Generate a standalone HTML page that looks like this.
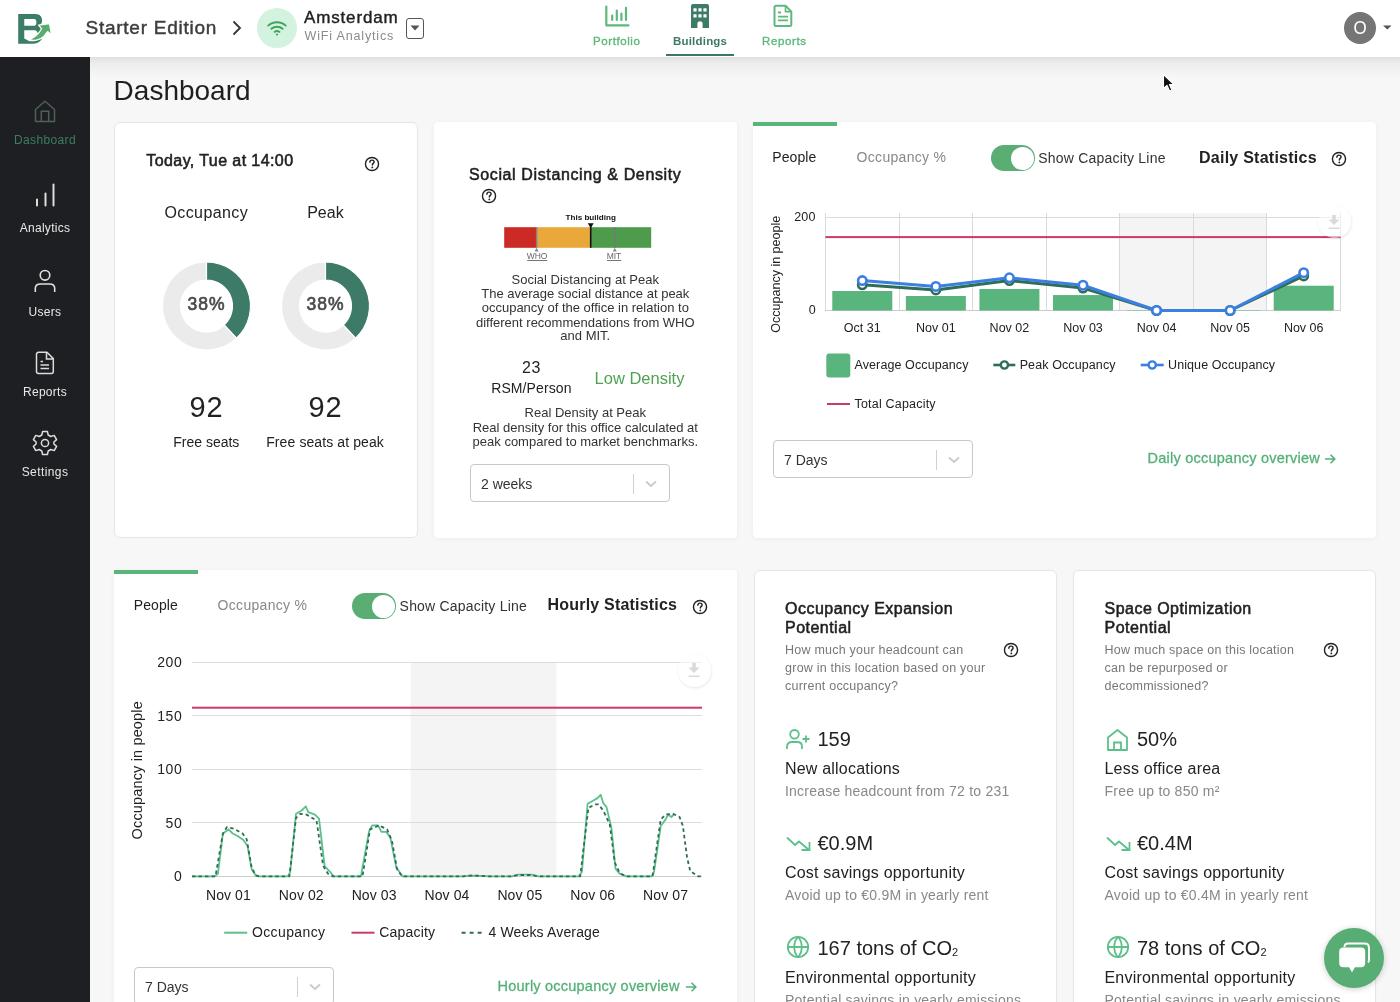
<!DOCTYPE html>
<html><head><meta charset="utf-8">
<style>
*{box-sizing:border-box;margin:0;padding:0}
html,body{width:1400px;height:1002px;overflow:hidden}
body{font-family:"Liberation Sans",sans-serif;background:#f7f7f7;color:#222;position:relative}
.abs{position:absolute}
.t{position:absolute;white-space:nowrap;line-height:1}
#header{position:absolute;left:0;top:0;width:1400px;height:57px;background:#fff;z-index:5}
#hshadow{position:absolute;left:90px;top:57px;width:1310px;height:20px;background:linear-gradient(#e0e0e0,#ececec 30%,rgba(247,247,247,0));z-index:4}
#sidebar{position:absolute;left:0;top:57px;width:90px;height:945px;background:#1e1f22}
.side-l{position:absolute;left:0;width:90px;text-align:center;font-size:12px;color:#e8e8e8;line-height:1}
.card{position:absolute;background:#fff;border:1px solid #e6e6e6;border-radius:6px;box-shadow:0 0 2px rgba(0,0,0,0.04)}
.card2{position:absolute;background:#fff;border-radius:4px}
.help{position:absolute;width:15px;height:15px;border:1.5px solid #222;border-radius:50%;font-size:10px;font-weight:bold;text-align:center;line-height:12px;color:#222}
.sel{position:absolute;height:37px;border:1px solid #c8c8c8;border-radius:4px;background:#fff}
.sel .v{position:absolute;left:10px;top:11px;font-size:14px;color:#333;line-height:1}
.sel .sep{position:absolute;top:8px;width:1px;height:20px;background:#ccc}
</style></head>
<body><div id="root" style="position:absolute;left:0;top:0;width:1400px;height:1002px;overflow:hidden;will-change:transform">
<div id="header">
<svg class="abs" style="left:16px;top:12px" width="38" height="34" viewBox="0 0 38 34">
<path fill-rule="evenodd" d="M2.2 2.1 H19.5 C24 2.1 26.1 5 26.1 8.6 C26.1 11 25 12.5 23.5 13.6 C26 15 27.5 17.5 27.5 21 C27.5 27.5 23 31.8 17 31.8 H2.2 Z M8.25 7.1 V13.8 H18.2 C19.8 13.8 20.4 12.3 20.4 10.5 C20.4 8.6 19.8 7.1 18.2 7.1 Z M8.25 18.2 V26.6 L13.5 29.2 H18.5 C20.5 29.2 22 27 22 23 C22 19.8 20.5 18.2 18.5 18.2 Z" fill="#3b7d67"/>
<path d="M13.2 27.6 C17.5 29 24 28.6 28 24.2 L31.6 19.6 L35.6 22.9 L33.5 11.6 L22.6 13.1 L25.6 16.8 C22.8 21.8 19 25.6 13.2 27.6 Z" fill="#58ad6e" stroke="#fff" stroke-width="1.3" stroke-linejoin="round"/>
</svg>
<div class="t" style="left:85.5px;top:18.3px;font-size:19px;-webkit-text-stroke:0.45px #3b3e3d;color:#3b3e3d;letter-spacing:0.75px">Starter Edition</div>
<svg class="abs" style="left:231px;top:20px" width="12" height="16" viewBox="0 0 12 16"><path d="M2.5 1.5 L9 8 L2.5 14.5" fill="none" stroke="#333" stroke-width="1.8"/></svg>
<div class="abs" style="left:257px;top:8px;width:40px;height:40px;border-radius:50%;background:#d3f2df"></div>
<svg class="abs" style="left:267px;top:20px" width="20" height="16" viewBox="0 0 20 16">
<path d="M1.3 5.6 C6 1.2 14 1.2 18.7 5.6" fill="none" stroke="#3fa55a" stroke-width="1.9" stroke-linecap="round"/>
<path d="M4.4 8.8 C7.5 6 12.5 6 15.6 8.8" fill="none" stroke="#3fa55a" stroke-width="1.9" stroke-linecap="round"/>
<path d="M7.5 11.9 C9 10.8 11 10.8 12.5 11.9" fill="none" stroke="#3fa55a" stroke-width="1.8" stroke-linecap="round"/>
<circle cx="10" cy="14.5" r="1.1" fill="#3fa55a"/>
</svg>
<div class="t" style="left:304px;top:9.3px;font-size:17px;-webkit-text-stroke:0.4px #222;color:#222;letter-spacing:0.85px">Amsterdam</div>
<div class="t" style="left:304.5px;top:30px;font-size:12.5px;color:#8a8a8a;letter-spacing:0.85px">WiFi Analytics</div>
<div class="abs" style="left:406px;top:18px;width:18px;height:21px;border:1.5px solid #555;border-radius:3px"></div>
<svg class="abs" style="left:410px;top:25px" width="10" height="6"><path d="M0.5 0.5 H9.5 L5 5.5 Z" fill="#555"/></svg>

<svg class="abs" style="left:604px;top:5px" width="27" height="23" viewBox="0 0 27 23">
<path d="M2.3 1.5 V20.3 H24.5" fill="none" stroke="#5cb87b" stroke-width="2.2" stroke-linecap="round" stroke-linejoin="round"/>
<path d="M8.2 15 V10.5 M12.8 15 V5.5 M17.4 15 V8.5 M22 15 V2.8" fill="none" stroke="#5cb87b" stroke-width="2.2" stroke-linecap="round"/>
</svg>
<div class="t" style="left:593px;top:35.9px;font-size:11.5px;-webkit-text-stroke:0.35px #5cb87b;color:#5cb87b;letter-spacing:0.59px">Portfolio</div>
<svg class="abs" style="left:691px;top:4px" width="18" height="24" viewBox="0 0 18 24">
<path d="M2 0 H16 A2 2 0 0 1 18 2 V24 H11.6 V19.8 A2.6 2.6 0 0 0 6.4 19.8 V24 H0 V2 A2 2 0 0 1 2 0 Z" fill="#3d7b68"/>
<rect x="2.4" y="4.2" width="3.2" height="3.2" rx="0.5" fill="#fff"/><rect x="7.4" y="4.2" width="3.2" height="3.2" rx="0.5" fill="#fff"/><rect x="12.4" y="4.2" width="3.2" height="3.2" rx="0.5" fill="#fff"/>
<rect x="2.4" y="10.2" width="3.2" height="3.2" rx="0.5" fill="#fff"/><rect x="7.4" y="10.2" width="3.2" height="3.2" rx="0.5" fill="#fff"/><rect x="12.4" y="10.2" width="3.2" height="3.2" rx="0.5" fill="#fff"/>
</svg>
<div class="t" style="left:673px;top:36px;font-size:11.5px;font-weight:bold;color:#3d7866;letter-spacing:0.2px">Buildings</div>
<div class="abs" style="left:666px;top:54px;width:68px;height:2px;background:#3d7866"></div>
<svg class="abs" style="left:773px;top:4px" width="20" height="24" viewBox="0 0 20 24">
<path d="M3 1.8 H12.5 L18.3 7.6 V20.5 A1.5 1.5 0 0 1 16.8 22 H3 A1.5 1.5 0 0 1 1.5 20.5 V3.3 A1.5 1.5 0 0 1 3 1.8 Z" fill="none" stroke="#5cb87b" stroke-width="2" stroke-linejoin="round"/>
<path d="M12.5 1.8 V7.6 H18.3" fill="none" stroke="#5cb87b" stroke-width="1.6"/>
<path d="M5 8.5 H8 M5 12.6 H15 M5 16.4 H15" stroke="#5cb87b" stroke-width="1.8"/>
</svg>
<div class="t" style="left:762px;top:35.8px;font-size:11.5px;-webkit-text-stroke:0.35px #5cb87b;color:#5cb87b;letter-spacing:0.63px">Reports</div>

<div class="abs" style="left:1344px;top:12px;width:32px;height:32px;border-radius:50%;background:#757575"></div>
<div class="t" style="left:1344px;top:20px;width:32px;text-align:center;font-size:17px;color:#fff;transform:scaleY(1.08)">O</div>
<svg class="abs" style="left:1383px;top:25px" width="9" height="5"><path d="M0 0.5 H8.5 L4.25 4.5 Z" fill="#555"/></svg>
</div>
<div id="hshadow"></div>
<div id="sidebar">
<svg class="abs" style="left:34px;top:43px" width="22" height="23" viewBox="0 0 22 23">
<path d="M1.5 9.5 L11 1.3 L20.5 9.5 V21.5 H1.5 Z" fill="none" stroke="#4f5f57" stroke-width="1.5" stroke-linejoin="round"/>
<path d="M7.3 21.5 V11.3 H14.7 V21.5" fill="none" stroke="#4f5f57" stroke-width="1.5"/>
</svg>
<div class="side-l" style="top:77px;color:#3b7f61;letter-spacing:0.35px">Dashboard</div>
<svg class="abs" style="left:35px;top:126px" width="21" height="24" viewBox="0 0 21 24">
<path d="M2 16.5 V22.5 M10.5 10.5 V22.5 M18.5 1.5 V22.5" stroke="#dcdcdc" stroke-width="2" stroke-linecap="round"/>
</svg>
<div class="side-l" style="top:165px;letter-spacing:0.3px">Analytics</div>
<svg class="abs" style="left:34px;top:212px" width="22" height="24" viewBox="0 0 22 24">
<circle cx="11" cy="6.3" r="4.8" fill="none" stroke="#e0e0e0" stroke-width="1.6"/>
<path d="M1.3 23 V19.5 C1.3 16.5 3.5 15 6.5 15 H15.5 C18.5 15 20.7 16.5 20.7 19.5 V23" fill="none" stroke="#e0e0e0" stroke-width="1.6"/>
</svg>
<div class="side-l" style="top:249px;letter-spacing:0.3px">Users</div>
<svg class="abs" style="left:35px;top:294px" width="20" height="24" viewBox="0 0 20 24">
<path d="M3.5 1.3 H12 L18.3 7.6 V20.5 A2 2 0 0 1 16.3 22.5 H3.5 A2 2 0 0 1 1.5 20.5 V3.3 A2 2 0 0 1 3.5 1.3 Z" fill="none" stroke="#dcdcdc" stroke-width="1.5" stroke-linejoin="round"/>
<path d="M11.5 1.5 V8 H18" fill="none" stroke="#dcdcdc" stroke-width="1.5"/>
<path d="M5.5 10.5 H8 M5.5 14 H14 M5.5 17.5 H14" stroke="#dcdcdc" stroke-width="1.5"/>
</svg>
<div class="side-l" style="top:329px;letter-spacing:0.3px">Reports</div>
<svg class="abs" style="left:32px;top:373px" width="26" height="26" viewBox="0 0 26 26">
<path d="M10.6 1.5 H15.4 L16.2 5 L18.8 6.5 L22.2 5.4 L24.6 9.6 L21.9 12 V14 L24.6 16.4 L22.2 20.6 L18.8 19.5 L16.2 21 L15.4 24.5 H10.6 L9.8 21 L7.2 19.5 L3.8 20.6 L1.4 16.4 L4.1 14 V12 L1.4 9.6 L3.8 5.4 L7.2 6.5 L9.8 5 Z" fill="none" stroke="#dcdcdc" stroke-width="1.5" stroke-linejoin="round"/>
<circle cx="13" cy="13" r="3.6" fill="none" stroke="#dcdcdc" stroke-width="1.5"/>
</svg>
<div class="side-l" style="top:409px;letter-spacing:0.4px">Settings</div>
</div>

<div class="t" style="top:77.30px;font-size:28px;color:#1f1f1f;left:113.60px;">Dashboard</div>
<div class="card" style="left:114px;top:122px;width:304px;height:416px"></div>
<div class="t" style="top:153.36px;font-size:16px;-webkit-text-stroke:0.55px #222;letter-spacing:0.41px;left:146.30px;">Today, Tue at 14:00</div>
<svg class="abs" style="left:364.00px;top:156.30px" width="16" height="16" viewBox="0 0 16 16">
<circle cx="8" cy="8" r="6.55" fill="none" stroke="#222" stroke-width="1.4"/>
<path d="M5.9 6.2 C5.9 4.9 6.9 4.1 8 4.1 C9.2 4.1 10.1 4.9 10.1 6 C10.1 7.3 8.3 7.5 8.3 9.1" fill="none" stroke="#222" stroke-width="1.4" stroke-linecap="round"/>
<circle cx="8.3" cy="11.4" r="0.9" fill="#222"/>
</svg>
<div class="t" style="top:205.16px;font-size:16px;letter-spacing:0.4px;left:106.30px;width:200px;text-align:center;">Occupancy</div>
<div class="t" style="top:205.16px;font-size:16px;left:225.40px;width:200px;text-align:center;">Peak</div>
<svg class="abs" style="left:0;top:0" width="1400" height="1002"><path d="M236.62 338.07 A44 44 0 1 1 206.5 262 L206.5 280 A26 26 0 1 0 224.30 324.95 Z" fill="#ebebeb" stroke="#fff" stroke-width="1.2"/><path d="M206.5 262 A44 44 0 0 1 236.62 338.07 L224.30 324.95 A26 26 0 0 0 206.5 280 Z" fill="#3d7a68" stroke="#fff" stroke-width="1.2"/><path d="M355.62 338.07 A44 44 0 1 1 325.5 262 L325.5 280 A26 26 0 1 0 343.30 324.95 Z" fill="#ebebeb" stroke="#fff" stroke-width="1.2"/><path d="M325.5 262 A44 44 0 0 1 355.62 338.07 L343.30 324.95 A26 26 0 0 0 325.5 280 Z" fill="#3d7a68" stroke="#fff" stroke-width="1.2"/></svg>
<div class="t" style="top:295.59px;font-size:17.5px;-webkit-text-stroke:0.55px #4a4a4a;color:#4a4a4a;letter-spacing:1.0px;left:156.50px;width:100px;text-align:center;-webkit-text-stroke:0.65px #4a4a4a">38%</div>
<div class="t" style="top:295.59px;font-size:17.5px;-webkit-text-stroke:0.55px #4a4a4a;color:#4a4a4a;letter-spacing:1.0px;left:275.50px;width:100px;text-align:center;-webkit-text-stroke:0.65px #4a4a4a">38%</div>
<div class="t" style="top:393.15px;font-size:29px;letter-spacing:1px;left:156.60px;width:100px;text-align:center;">92</div>
<div class="t" style="top:393.15px;font-size:29px;letter-spacing:1px;left:275.60px;width:100px;text-align:center;">92</div>
<div class="t" style="top:435.15px;font-size:14px;left:126.30px;width:160px;text-align:center;">Free seats</div>
<div class="t" style="top:435.15px;font-size:14px;letter-spacing:0.1px;left:245.10px;width:160px;text-align:center;">Free seats at peak</div>
<div class="card2" style="left:434px;top:122px;width:303px;height:416px;box-shadow:0 1px 5px rgba(0,0,0,0.05)"></div>
<div class="t" style="top:167.36px;font-size:16px;-webkit-text-stroke:0.55px #1f1f1f;color:#1f1f1f;letter-spacing:0.62px;left:469.00px;">Social Distancing &amp; Density</div>
<svg class="abs" style="left:480.90px;top:187.80px" width="16" height="16" viewBox="0 0 16 16">
<circle cx="8" cy="8" r="6.55" fill="none" stroke="#222" stroke-width="1.4"/>
<path d="M5.9 6.2 C5.9 4.9 6.9 4.1 8 4.1 C9.2 4.1 10.1 4.9 10.1 6 C10.1 7.3 8.3 7.5 8.3 9.1" fill="none" stroke="#222" stroke-width="1.4" stroke-linecap="round"/>
<circle cx="8.3" cy="11.4" r="0.9" fill="#222"/>
</svg>
<div class="t" style="top:214.34px;font-size:8.1px;font-weight:bold;color:#111;left:540.70px;width:100px;text-align:center;">This building</div>
<svg class="abs" style="left:0;top:0" width="1400" height="1002">
<rect x="504.2" y="227.2" width="32.4" height="20.6" fill="#cc2b25"/>
<rect x="536.6" y="227.2" width="54" height="20.6" fill="#eaa83a"/>
<rect x="590.6" y="227.2" width="60.6" height="20.6" fill="#4e9c4b"/>
<rect x="535.9" y="227.2" width="1.5" height="20.6" fill="#8a7f8a"/>
<rect x="614.1" y="227.2" width="1.5" height="20.6" fill="#777"/>
<rect x="589.9" y="225" width="1.6" height="22.8" fill="#111"/>
<path d="M587.7 223.2 H593.7 L590.7 228 Z" fill="#111"/>
<path d="M534.6 251.5 H538.6 L536.6 247.8 Z" fill="#888"/>
<path d="M612.8 251.5 H616.8 L614.8 247.8 Z" fill="#888"/>
<rect x="527.2" y="260" width="20" height="0.9" fill="#666"/>
<rect x="607" y="260" width="14.2" height="0.9" fill="#666"/>
</svg>
<div class="t" style="top:252.20px;font-size:8.5px;color:#666;left:517.10px;width:40px;text-align:center;">WHO</div>
<div class="t" style="top:252.20px;font-size:8.5px;color:#666;left:594.00px;width:40px;text-align:center;">MIT</div>
<div class="t" style="top:272.75px;font-size:13px;color:#333;left:455.30px;width:260px;text-align:center;">Social Distancing at Peak</div>
<div class="t" style="top:287.00px;font-size:13px;color:#333;left:455.30px;width:260px;text-align:center;">The average social distance at peak</div>
<div class="t" style="top:300.80px;font-size:13px;color:#333;left:455.30px;width:260px;text-align:center;">occupancy of the office in relation to</div>
<div class="t" style="top:315.60px;font-size:13px;color:#333;left:455.30px;width:260px;text-align:center;">different recommendations from WHO</div>
<div class="t" style="top:329.20px;font-size:13px;color:#333;left:455.30px;width:260px;text-align:center;">and MIT.</div>
<div class="t" style="top:360.06px;font-size:16px;letter-spacing:0.5px;left:481.40px;width:100px;text-align:center;">23</div>
<div class="t" style="top:380.85px;font-size:14px;letter-spacing:0.1px;left:471.40px;width:120px;text-align:center;">RSM/Person</div>
<div class="t" style="top:369.78px;font-size:16.5px;color:#4ea251;left:569.50px;width:140px;text-align:center;">Low Density</div>
<div class="t" style="top:406.00px;font-size:13px;color:#333;left:455.30px;width:260px;text-align:center;">Real Density at Peak</div>
<div class="t" style="top:420.80px;font-size:13px;color:#333;left:455.30px;width:260px;text-align:center;">Real density for this office calculated at</div>
<div class="t" style="top:434.50px;font-size:13px;color:#333;left:455.30px;width:260px;text-align:center;">peak compared to market benchmarks.</div>
<div class="sel" style="left:470px;top:464px;width:200px;height:38px">
<div class="t" style="left:10px;top:12.25px;font-size:14px;color:#333">2 weeks</div>
<div class="abs" style="left:162px;top:8.5px;width:1px;height:20px;background:#d0d0d0"></div>
<svg class="abs" style="left:174px;top:14.5px" width="12" height="8"><path d="M1 1.5 L6 6 L11 1.5" fill="none" stroke="#cbcbcb" stroke-width="2"/></svg>
</div>
<div class="card2" style="left:753px;top:122px;width:623px;height:416px;box-shadow:0 1px 5px rgba(0,0,0,0.05)"></div>
<div class="abs" style="left:753px;top:122px;width:84px;height:4px;background:#5ab57a"></div>
<div class="t" style="top:150.05px;font-size:14px;color:#1f1f1f;letter-spacing:0.1px;left:772.20px;">People</div>
<div class="t" style="top:150.05px;font-size:14px;color:#888;letter-spacing:0.3px;left:856.60px;">Occupancy %</div>
<div class="abs" style="left:991px;top:145px;width:44px;height:26px;border-radius:13px;background:#5aae74"></div>
<div class="abs" style="left:1010.5px;top:146.5px;width:23px;height:23px;border-radius:50%;background:#fff"></div>
<div class="t" style="top:151.05px;font-size:14px;color:#333;letter-spacing:0.2px;left:1038.30px;">Show Capacity Line</div>
<div class="t" style="top:149.86px;font-size:16px;font-weight:bold;letter-spacing:0.25px;left:1199.00px;">Daily Statistics</div>
<svg class="abs" style="left:1331.00px;top:151.00px" width="16" height="16" viewBox="0 0 16 16">
<circle cx="8" cy="8" r="6.55" fill="none" stroke="#222" stroke-width="1.4"/>
<path d="M5.9 6.2 C5.9 4.9 6.9 4.1 8 4.1 C9.2 4.1 10.1 4.9 10.1 6 C10.1 7.3 8.3 7.5 8.3 9.1" fill="none" stroke="#222" stroke-width="1.4" stroke-linecap="round"/>
<circle cx="8.3" cy="11.4" r="0.9" fill="#222"/>
</svg>
<svg class="abs" style="left:0;top:0" width="1400" height="1002"><rect x="1119.79" y="213.3" width="147.14" height="97.20" fill="#f4f4f4"/><rect x="825" y="213" width="1" height="97" fill="#dadada"/><rect x="899" y="213" width="1" height="97" fill="#dadada"/><rect x="972" y="213" width="1" height="97" fill="#dadada"/><rect x="1046" y="213" width="1" height="97" fill="#dadada"/><rect x="1119" y="213" width="1" height="97" fill="#dadada"/><rect x="1193" y="213" width="1" height="97" fill="#dadada"/><rect x="1266" y="213" width="1" height="97" fill="#dadada"/><rect x="1340" y="213" width="1" height="97" fill="#dadada"/><rect x="825" y="217" width="516" height="1" fill="#dadada"/><rect x="825" y="310" width="516" height="1" fill="#cdcdcd"/><rect x="832.29" y="291.01" width="60" height="19.49" fill="#5ab47d"/><rect x="905.86" y="296.01" width="60" height="14.49" fill="#5ab47d"/><rect x="979.43" y="289.00" width="60" height="21.51" fill="#5ab47d"/><rect x="1053.00" y="295.07" width="60" height="15.43" fill="#5ab47d"/><rect x="1126.57" y="310.13" width="60" height="0.37" fill="#5ab47d"/><rect x="1200.14" y="310.13" width="60" height="0.37" fill="#5ab47d"/><rect x="1273.71" y="285.72" width="60" height="24.78" fill="#5ab47d"/><rect x="825.5" y="236.10" width="515.0" height="2" fill="#c93a6b"/><polyline points="862.29,284.79 935.86,289.93 1009.43,280.58 1083.00,288.06 1156.57,310.50 1230.14,310.50 1303.71,275.90" fill="none" stroke="#2f6d57" stroke-width="3" stroke-linejoin="round"/><circle cx="862.29" cy="284.79" r="4.2" fill="#fff" stroke="#2f6d57" stroke-width="2.6"/><circle cx="935.86" cy="289.93" r="4.2" fill="#fff" stroke="#2f6d57" stroke-width="2.6"/><circle cx="1009.43" cy="280.58" r="4.2" fill="#fff" stroke="#2f6d57" stroke-width="2.6"/><circle cx="1083.00" cy="288.06" r="4.2" fill="#fff" stroke="#2f6d57" stroke-width="2.6"/><circle cx="1156.57" cy="310.50" r="4.2" fill="#fff" stroke="#2f6d57" stroke-width="2.6"/><circle cx="1230.14" cy="310.50" r="4.2" fill="#fff" stroke="#2f6d57" stroke-width="2.6"/><circle cx="1303.71" cy="275.90" r="4.2" fill="#fff" stroke="#2f6d57" stroke-width="2.6"/><polyline points="862.29,280.58 935.86,286.42 1009.43,277.77 1083.00,285.25 1156.57,310.50 1230.14,310.50 1303.71,272.63" fill="none" stroke="#3b7fe0" stroke-width="3" stroke-linejoin="round"/><circle cx="862.29" cy="280.58" r="4.2" fill="#fff" stroke="#3b7fe0" stroke-width="2.6"/><circle cx="935.86" cy="286.42" r="4.2" fill="#fff" stroke="#3b7fe0" stroke-width="2.6"/><circle cx="1009.43" cy="277.77" r="4.2" fill="#fff" stroke="#3b7fe0" stroke-width="2.6"/><circle cx="1083.00" cy="285.25" r="4.2" fill="#fff" stroke="#3b7fe0" stroke-width="2.6"/><circle cx="1156.57" cy="310.50" r="4.2" fill="#fff" stroke="#3b7fe0" stroke-width="2.6"/><circle cx="1230.14" cy="310.50" r="4.2" fill="#fff" stroke="#3b7fe0" stroke-width="2.6"/><circle cx="1303.71" cy="272.63" r="4.2" fill="#fff" stroke="#3b7fe0" stroke-width="2.6"/><rect x="826.3" y="353.6" width="24" height="24" rx="3" fill="#5ab47d"/><rect x="993.3" y="363.7" width="22" height="2.6" fill="#2f6d57"/><circle cx="1004.4" cy="365" r="3.6" fill="#fff" stroke="#2f6d57" stroke-width="2.4"/><rect x="1140.7" y="363.7" width="23" height="2.6" fill="#3b7fe0"/><circle cx="1152.2" cy="365" r="3.6" fill="#fff" stroke="#3b7fe0" stroke-width="2.4"/><rect x="827" y="403" width="23" height="2" fill="#c93a6b"/></svg>
<div class="abs" style="left:1317.5px;top:204.5px;width:33px;height:33px;border-radius:50%;background:rgba(255,255,255,0.55);box-shadow:0.5px 1px 3px rgba(0,0,0,0.10)"></div><svg class="abs" style="left:1326px;top:211px" width="16" height="19" viewBox="0 0 16 19"><path d="M6.2 4 H9.8 V8.6 H13.5 L8 14 L2.5 8.6 H6.2 Z M2.5 16.5 H13.5 V18 H2.5 Z" fill="#dadada"/></svg>
<div class="t" style="top:211.42px;font-size:12.5px;letter-spacing:0.2px;left:755.60px;width:60px;text-align:right;">200</div>
<div class="t" style="top:304.02px;font-size:12.5px;left:755.60px;width:60px;text-align:right;">0</div>
<div class="t" style="left:716px;top:268.0px;width:120px;text-align:center;font-size:12.5px;transform:rotate(-90deg);color:#222">Occupancy in people</div>
<div class="t" style="top:322.22px;font-size:12.5px;left:827.29px;width:70px;text-align:center;">Oct 31</div>
<div class="t" style="top:322.22px;font-size:12.5px;left:900.86px;width:70px;text-align:center;">Nov 01</div>
<div class="t" style="top:322.22px;font-size:12.5px;left:974.43px;width:70px;text-align:center;">Nov 02</div>
<div class="t" style="top:322.22px;font-size:12.5px;left:1048.00px;width:70px;text-align:center;">Nov 03</div>
<div class="t" style="top:322.22px;font-size:12.5px;left:1121.57px;width:70px;text-align:center;">Nov 04</div>
<div class="t" style="top:322.22px;font-size:12.5px;left:1195.14px;width:70px;text-align:center;">Nov 05</div>
<div class="t" style="top:322.22px;font-size:12.5px;left:1268.71px;width:70px;text-align:center;">Nov 06</div>
<div class="t" style="top:358.72px;font-size:12.5px;letter-spacing:0.1px;left:854.50px;">Average Occupancy</div>
<div class="t" style="top:358.72px;font-size:12.5px;letter-spacing:0.1px;left:1019.70px;">Peak Occupancy</div>
<div class="t" style="top:358.72px;font-size:12.5px;letter-spacing:0.1px;left:1168.00px;">Unique Occupancy</div>
<div class="t" style="top:397.82px;font-size:12.5px;letter-spacing:0.2px;left:854.50px;">Total Capacity</div>
<div class="sel" style="left:773px;top:440px;width:200px;height:38px">
<div class="t" style="left:10px;top:12.25px;font-size:14px;color:#333">7 Days</div>
<div class="abs" style="left:162px;top:8.5px;width:1px;height:20px;background:#d0d0d0"></div>
<svg class="abs" style="left:174px;top:14.5px" width="12" height="8"><path d="M1 1.5 L6 6 L11 1.5" fill="none" stroke="#cbcbcb" stroke-width="2"/></svg>
</div>
<div class="t" style="top:451.23px;font-size:14.5px;color:#55b079;letter-spacing:0.24px;left:1147.50px;-webkit-text-stroke:0.3px #55b079">Daily occupancy overview</div>
<svg class="abs" style="left:1323.8px;top:452.9px" width="13" height="12" viewBox="0 0 13 12"><path d="M1 6 H10.5 M6.5 1.8 L10.8 6 L6.5 10.2" fill="none" stroke="#55b079" stroke-width="1.6"/></svg>
<div class="card2" style="left:114px;top:570px;width:623px;height:440px;box-shadow:0 1px 5px rgba(0,0,0,0.05)"></div>
<div class="abs" style="left:114px;top:570px;width:84px;height:4px;background:#5ab57a"></div>
<div class="t" style="top:598.45px;font-size:14px;color:#1f1f1f;letter-spacing:0.1px;left:133.70px;">People</div>
<div class="t" style="top:598.45px;font-size:14px;color:#888;letter-spacing:0.3px;left:217.60px;">Occupancy %</div>
<div class="abs" style="left:352px;top:593px;width:44px;height:26px;border-radius:13px;background:#5aae74"></div>
<div class="abs" style="left:371.5px;top:594.5px;width:23px;height:23px;border-radius:50%;background:#fff"></div>
<div class="t" style="top:599.35px;font-size:14px;color:#333;letter-spacing:0.2px;left:399.60px;">Show Capacity Line</div>
<div class="t" style="top:597.46px;font-size:16px;font-weight:bold;letter-spacing:0.2px;left:547.50px;">Hourly Statistics</div>
<svg class="abs" style="left:692.10px;top:599.00px" width="16" height="16" viewBox="0 0 16 16">
<circle cx="8" cy="8" r="6.55" fill="none" stroke="#222" stroke-width="1.4"/>
<path d="M5.9 6.2 C5.9 4.9 6.9 4.1 8 4.1 C9.2 4.1 10.1 4.9 10.1 6 C10.1 7.3 8.3 7.5 8.3 9.1" fill="none" stroke="#222" stroke-width="1.4" stroke-linecap="round"/>
<circle cx="8.3" cy="11.4" r="0.9" fill="#222"/>
</svg>
<svg class="abs" style="left:0;top:0" width="1400" height="1002"><rect x="410.57" y="662" width="145.71" height="214.4" fill="#f4f4f4"/><rect x="192" y="662" width="510" height="1" fill="#dddddd"/><rect x="192" y="715" width="510" height="1" fill="#dddddd"/><rect x="192" y="769" width="510" height="1" fill="#dddddd"/><rect x="192" y="822" width="510" height="1" fill="#dddddd"/><rect x="192" y="876" width="510" height="1" fill="#cdcdcd"/><rect x="192.0" y="706.7" width="510.0" height="2" fill="#c93a6b"/><polyline points="192.0,876.4 214.6,876.4 217.9,873.8 222.9,833.5 228.6,829.4 232.7,833.5 237.6,836.0 243.4,840.1 247.5,845.9 251.6,868.9 255.7,875.4 259.0,876.4 287.7,876.4 290.2,872.1 296.0,813.8 301.7,810.5 305.8,806.4 308.3,812.2 314.9,814.6 319.0,818.7 324.7,866.4 329.6,871.3 333.7,876.4 360.9,876.4 369.1,831.1 372.4,825.3 378.1,825.3 381.4,831.9 386.3,831.9 390.4,837.6 396.2,867.2 402.7,876.4 463.0,876.4 470.0,875.6 480.0,875.8 490.0,876.4 512.0,876.4 518.0,874.6 532.0,874.6 538.0,876.4 578.6,876.4 581.9,872.0 587.6,803.8 593.4,800.5 597.5,798.1 600.7,794.8 603.2,803.0 606.5,807.1 611.4,827.6 615.5,868.7 619.6,873.6 626.2,876.4 651.7,876.4 654.0,872.0 660.7,826.0 665.6,819.4 668.1,814.5 671.4,817.0 673.9,814.5" fill="none" stroke="#5cc08a" stroke-width="1.8" stroke-linejoin="round"/><polyline points="192.0,876.4 215.5,876.4 222.9,833.5 227.0,827.0 233.5,828.6 242.6,833.5 246.7,839.3 251.6,867.2 255.7,875.4 259.0,876.4 289.4,876.4 296.0,817.9 300.1,813.8 306.6,814.6 316.5,820.4 323.1,865.6 328.0,873.8 333.0,876.4 362.5,876.4 370.0,829.4 374.0,827.8 378.9,825.3 387.1,829.4 392.0,840.9 397.0,868.9 402.0,876.4 463.0,876.4 470.0,875.6 480.0,875.8 490.0,876.4 512.0,876.4 518.0,875.0 532.0,875.0 538.0,876.4 580.2,876.4 588.4,807.9 595.0,804.3 598.3,804.3 603.2,810.4 609.8,824.4 614.7,862.1 619.6,873.0 626.2,876.4 652.5,876.4 660.7,819.4 665.6,814.5 673.0,813.7 679.6,817.0 682.9,826.0 687.0,857.2 690.3,871.2 698.5,876.4 702.0,876.4" fill="none" stroke="#2f6d57" stroke-width="1.8" stroke-dasharray="3.5 3" stroke-linejoin="round"/><rect x="224.2" y="931.7" width="23" height="2" fill="#5cc08a"/><rect x="351.5" y="931.7" width="23" height="2" fill="#c93a6b"/><path d="M461.6 932.7 H482.5" stroke="#2f6d57" stroke-width="2" stroke-dasharray="4 4"/></svg>
<div class="abs" style="left:677.5px;top:654px;width:33px;height:33px;border-radius:50%;background:rgba(255,255,255,0.55);box-shadow:0.5px 1px 3px rgba(0,0,0,0.10)"></div><svg class="abs" style="left:686px;top:658.8px" width="16" height="19" viewBox="0 0 16 19"><path d="M6.2 4 H9.8 V8.6 H13.5 L8 14 L2.5 8.6 H6.2 Z M2.5 16.5 H13.5 V18 H2.5 Z" fill="#dadada"/></svg>
<div class="t" style="top:655.35px;font-size:14px;letter-spacing:0.6px;left:122.30px;width:60px;text-align:right;">200</div>
<div class="t" style="top:708.65px;font-size:14px;letter-spacing:0.6px;left:122.30px;width:60px;text-align:right;">150</div>
<div class="t" style="top:762.35px;font-size:14px;letter-spacing:0.6px;left:122.30px;width:60px;text-align:right;">100</div>
<div class="t" style="top:815.65px;font-size:14px;letter-spacing:0.6px;left:122.30px;width:60px;text-align:right;">50</div>
<div class="t" style="top:869.35px;font-size:14px;letter-spacing:0.6px;left:122.30px;width:60px;text-align:right;">0</div>
<div class="t" style="left:66.80000000000001px;top:762.9000000000001px;width:140px;text-align:center;font-size:14.5px;letter-spacing:0.15px;transform:rotate(-90deg);color:#222">Occupancy in people</div>
<div class="t" style="top:887.55px;font-size:14px;letter-spacing:0.1px;left:193.43px;width:70px;text-align:center;">Nov 01</div>
<div class="t" style="top:887.55px;font-size:14px;letter-spacing:0.1px;left:266.29px;width:70px;text-align:center;">Nov 02</div>
<div class="t" style="top:887.55px;font-size:14px;letter-spacing:0.1px;left:339.14px;width:70px;text-align:center;">Nov 03</div>
<div class="t" style="top:887.55px;font-size:14px;letter-spacing:0.1px;left:412.00px;width:70px;text-align:center;">Nov 04</div>
<div class="t" style="top:887.55px;font-size:14px;letter-spacing:0.1px;left:484.86px;width:70px;text-align:center;">Nov 05</div>
<div class="t" style="top:887.55px;font-size:14px;letter-spacing:0.1px;left:557.71px;width:70px;text-align:center;">Nov 06</div>
<div class="t" style="top:887.55px;font-size:14px;letter-spacing:0.1px;left:630.57px;width:70px;text-align:center;">Nov 07</div>
<div class="t" style="top:924.75px;font-size:14px;letter-spacing:0.4px;left:251.90px;">Occupancy</div>
<div class="t" style="top:924.75px;font-size:14px;letter-spacing:0.2px;left:379.20px;">Capacity</div>
<div class="t" style="top:924.75px;font-size:14px;letter-spacing:0.15px;left:488.50px;">4 Weeks Average</div>
<div class="sel" style="left:134px;top:967px;width:200px;height:38px">
<div class="t" style="left:10px;top:12.25px;font-size:14px;color:#333">7 Days</div>
<div class="abs" style="left:162px;top:8.5px;width:1px;height:20px;background:#d0d0d0"></div>
<svg class="abs" style="left:174px;top:14.5px" width="12" height="8"><path d="M1 1.5 L6 6 L11 1.5" fill="none" stroke="#cbcbcb" stroke-width="2"/></svg>
</div>
<div class="t" style="top:979.33px;font-size:14.5px;color:#55b079;letter-spacing:0.22px;left:497.60px;-webkit-text-stroke:0.3px #55b079">Hourly occupancy overview</div>
<svg class="abs" style="left:684.6px;top:980.9px" width="13" height="12" viewBox="0 0 13 12"><path d="M1 6 H10.5 M6.5 1.8 L10.8 6 L6.5 10.2" fill="none" stroke="#55b079" stroke-width="1.6"/></svg>
<div class="card" style="left:753.7px;top:570px;width:303px;height:450px"></div>
<div class="t" style="top:600.56px;font-size:16px;-webkit-text-stroke:0.55px #1f1f1f;color:#1f1f1f;letter-spacing:0.46px;left:785.10px;">Occupancy Expansion</div>
<div class="t" style="top:619.56px;font-size:16px;-webkit-text-stroke:0.55px #1f1f1f;color:#1f1f1f;letter-spacing:0.46px;left:785.10px;">Potential</div>
<div class="t" style="top:644.02px;font-size:12.5px;color:#777;letter-spacing:0.22px;left:785.10px;">How much your headcount can</div>
<div class="t" style="top:662.02px;font-size:12.5px;color:#777;letter-spacing:0.22px;left:785.10px;">grow in this location based on your</div>
<div class="t" style="top:680.02px;font-size:12.5px;color:#777;letter-spacing:0.22px;left:785.10px;">current occupancy?</div>
<svg class="abs" style="left:1003.00px;top:641.50px" width="16" height="16" viewBox="0 0 16 16">
<circle cx="8" cy="8" r="6.55" fill="none" stroke="#222" stroke-width="1.4"/>
<path d="M5.9 6.2 C5.9 4.9 6.9 4.1 8 4.1 C9.2 4.1 10.1 4.9 10.1 6 C10.1 7.3 8.3 7.5 8.3 9.1" fill="none" stroke="#222" stroke-width="1.4" stroke-linecap="round"/>
<circle cx="8.3" cy="11.4" r="0.9" fill="#222"/>
</svg>
<svg class="abs" style="left:786.0px;top:729.0px" width="25" height="21" viewBox="0 0 25 21">
<circle cx="8.5" cy="5.3" r="4.3" fill="none" stroke="#5cc08a" stroke-width="1.8"/>
<path d="M1 20 V17.5 C1 14.8 3 13 5.8 13 H11.2 C14 13 16 14.8 16 17.5 V20" fill="none" stroke="#5cc08a" stroke-width="1.8"/>
<path d="M20 6.5 V13.5 M16.5 10 H23.5" stroke="#5cc08a" stroke-width="1.8"/>
</svg><div class="t" style="top:729.07px;font-size:20px;left:817.50px;">159</div>
<div class="t" style="top:761.06px;font-size:16px;letter-spacing:0.2px;left:785.00px;">New allocations</div>
<div class="t" style="top:783.95px;font-size:14px;color:#888;letter-spacing:0.22px;left:785.00px;">Increase headcount from 72 to 231</div>
<svg class="abs" style="left:786.0px;top:836.0px" width="26" height="16" viewBox="0 0 26 16">
<path d="M1 1.5 L9 9 L13 5.5 L23 14" fill="none" stroke="#5cc08a" stroke-width="1.8"/>
<path d="M15.5 14 H23.5 V6" fill="none" stroke="#5cc08a" stroke-width="1.8"/>
</svg><div class="t" style="top:833.37px;font-size:20px;left:817.50px;">€0.9M</div>
<div class="t" style="top:865.36px;font-size:16px;letter-spacing:0.2px;left:785.00px;">Cost savings opportunity</div>
<div class="t" style="top:888.25px;font-size:14px;color:#888;letter-spacing:0.22px;left:785.00px;">Avoid up to €0.9M in yearly rent</div>
<svg class="abs" style="left:786.0px;top:935.0px" width="24" height="24" viewBox="0 0 24 24">
<circle cx="12" cy="12" r="10.2" fill="none" stroke="#5cc08a" stroke-width="1.8"/>
<path d="M2 12 H22 M12 1.8 C7 7 7 17 12 22.2 M12 1.8 C17 7 17 17 12 22.2" fill="none" stroke="#5cc08a" stroke-width="1.8"/>
</svg><div class="t" style="top:937.67px;font-size:20px;left:817.50px;">167 tons of CO<span style="font-size:11px;vertical-align:-1px">2</span></div>
<div class="t" style="top:969.66px;font-size:16px;letter-spacing:0.2px;left:785.00px;">Environmental opportunity</div>
<div class="t" style="top:992.55px;font-size:14px;color:#888;letter-spacing:0.22px;left:785.00px;">Potential savings in yearly emissions</div>
<div class="card" style="left:1073.2px;top:570px;width:303px;height:450px"></div>
<div class="t" style="top:600.56px;font-size:16px;-webkit-text-stroke:0.55px #1f1f1f;color:#1f1f1f;letter-spacing:0.46px;left:1104.60px;">Space Optimization</div>
<div class="t" style="top:619.56px;font-size:16px;-webkit-text-stroke:0.55px #1f1f1f;color:#1f1f1f;letter-spacing:0.46px;left:1104.60px;">Potential</div>
<div class="t" style="top:644.02px;font-size:12.5px;color:#777;letter-spacing:0.22px;left:1104.60px;">How much space on this location</div>
<div class="t" style="top:662.02px;font-size:12.5px;color:#777;letter-spacing:0.22px;left:1104.60px;">can be repurposed or</div>
<div class="t" style="top:680.02px;font-size:12.5px;color:#777;letter-spacing:0.22px;left:1104.60px;">decommissioned?</div>
<svg class="abs" style="left:1322.50px;top:641.50px" width="16" height="16" viewBox="0 0 16 16">
<circle cx="8" cy="8" r="6.55" fill="none" stroke="#222" stroke-width="1.4"/>
<path d="M5.9 6.2 C5.9 4.9 6.9 4.1 8 4.1 C9.2 4.1 10.1 4.9 10.1 6 C10.1 7.3 8.3 7.5 8.3 9.1" fill="none" stroke="#222" stroke-width="1.4" stroke-linecap="round"/>
<circle cx="8.3" cy="11.4" r="0.9" fill="#222"/>
</svg>
<svg class="abs" style="left:1105.5px;top:729.0px" width="25" height="22" viewBox="0 0 25 22">
<path d="M2 8.5 L11.5 1 L21 8.5 V21 H2 Z" fill="none" stroke="#5cc08a" stroke-width="1.8" stroke-linejoin="round"/>
<path d="M8 21 V13.5 H15 V21" fill="none" stroke="#5cc08a" stroke-width="1.8"/>
</svg><div class="t" style="top:729.07px;font-size:20px;left:1137.00px;">50%</div>
<div class="t" style="top:761.06px;font-size:16px;letter-spacing:0.2px;left:1104.50px;">Less office area</div>
<div class="t" style="top:783.95px;font-size:14px;color:#888;letter-spacing:0.22px;left:1104.50px;">Free up to 850 m²</div>
<svg class="abs" style="left:1105.5px;top:836.0px" width="26" height="16" viewBox="0 0 26 16">
<path d="M1 1.5 L9 9 L13 5.5 L23 14" fill="none" stroke="#5cc08a" stroke-width="1.8"/>
<path d="M15.5 14 H23.5 V6" fill="none" stroke="#5cc08a" stroke-width="1.8"/>
</svg><div class="t" style="top:833.37px;font-size:20px;left:1137.00px;">€0.4M</div>
<div class="t" style="top:865.36px;font-size:16px;letter-spacing:0.2px;left:1104.50px;">Cost savings opportunity</div>
<div class="t" style="top:888.25px;font-size:14px;color:#888;letter-spacing:0.22px;left:1104.50px;">Avoid up to €0.4M in yearly rent</div>
<svg class="abs" style="left:1105.5px;top:935.0px" width="24" height="24" viewBox="0 0 24 24">
<circle cx="12" cy="12" r="10.2" fill="none" stroke="#5cc08a" stroke-width="1.8"/>
<path d="M2 12 H22 M12 1.8 C7 7 7 17 12 22.2 M12 1.8 C17 7 17 17 12 22.2" fill="none" stroke="#5cc08a" stroke-width="1.8"/>
</svg><div class="t" style="top:937.67px;font-size:20px;left:1137.00px;">78 tons of CO<span style="font-size:11px;vertical-align:-1px">2</span></div>
<div class="t" style="top:969.66px;font-size:16px;letter-spacing:0.2px;left:1104.50px;">Environmental opportunity</div>
<div class="t" style="top:992.55px;font-size:14px;color:#888;letter-spacing:0.22px;left:1104.50px;">Potential savings in yearly emissions</div>
<div class="abs" style="left:1324px;top:928px;width:60px;height:60px;border-radius:50%;background:#57ad74;box-shadow:0 1px 6px rgba(0,0,0,0.2)"></div>
<svg class="abs" style="left:1336px;top:940px" width="36" height="36" viewBox="0 0 36 36">
<path d="M8.5 7 C8.5 4.8 10 3.6 12.5 3.6 H28.5 C31.5 3.6 33 5 33 8 V20 C33 21.2 32.6 22 31.8 22.4" fill="none" stroke="#fff" stroke-width="2"/>
<path d="M7.5 7.4 H25 C27.8 7.4 29.2 8.8 29.2 11.6 V23 C29.2 25.8 27.8 27.2 25 27.2 H19 L16 32.3 L13 27.2 H7.5 C4.7 27.2 3.2 25.8 3.2 23 V11.6 C3.2 8.8 4.7 7.4 7.5 7.4 Z" fill="#fff"/>
</svg>
<svg class="abs" style="left:1162px;top:73px;z-index:10" width="14" height="20" viewBox="0 0 14 20">
<path d="M1.5 1.5 V15.5 L5 12.3 L7.6 18 L9.9 17 L7.4 11.5 H12 Z" fill="#111" stroke="#fff" stroke-width="1.1" stroke-linejoin="round"/>
</svg>

</div></body></html>
